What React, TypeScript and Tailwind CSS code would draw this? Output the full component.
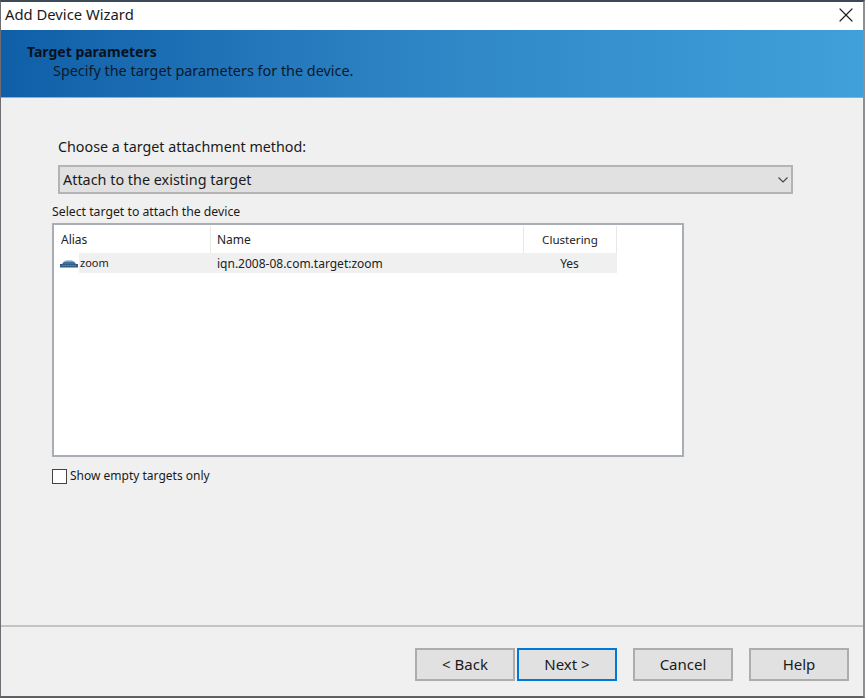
import { X } from 'lucide-react';

const font = { fontFamily: '"Noto Sans", "Open Sans", sans-serif' };

function WizardButton({ label, primary }: { label: string; primary?: boolean }) {
  return (
    <button
      className={`w-[100px] h-[33px] flex items-center justify-center pb-px bg-[#e1e1e1] text-[15px] text-[#1a1a1a] ${
        primary ? 'border-2 border-[#0078d7]' : 'border-2 border-[#adadad]'
      }`}
    >
      {label}
    </button>
  );
}

function TargetIcon() {
  return (
    <svg width="20" height="10" viewBox="0 0 20 10" className="shrink-0">
      <path d="M5 3.5 L15 3.5 L17 6 L3 6 Z" fill="#3f6f9c" />
      <path d="M6.5 2.5 H13.5 V3.5 H6.5 Z" fill="#6f8fae" />
      <path d="M1 6 H19 V9.5 H1 Z" fill="#2f5b85" />
      <path d="M3 7.5 H17" stroke="#8aa5bd" strokeWidth="0.7" strokeDasharray="1 0.6" />
    </svg>
  );
}

export default function App() {
  return (
    <div
      className="w-[865px] h-[698px] flex flex-col bg-[#f0f0f0] border-t-2 border-t-[#3c4a58] border-l border-l-[#6b6f73] border-r-2 border-r-[#8b8f93] border-b-2 border-b-[#5f6265] text-[#1a1a1a] overflow-hidden"
      style={font}
    >
      <div className="h-[28px] shrink-0 bg-white flex items-center justify-between pl-1 pr-[5px]">
        <span className="text-[14.8px] leading-none pb-1">Add Device Wizard</span>
        <X className="w-[24px] h-[24px] text-[#222] mb-[2px]" strokeWidth={1.2} />
      </div>

      <div className="h-[68px] shrink-0 bg-gradient-to-r from-[#0f5fa8] via-[#2f86c6] to-[#40a0d9] border-b border-b-[#a8a8a8] pt-[13px] pl-[26px] text-[#06121f]">
        <div className="text-[14px] leading-[18px] font-bold">Target parameters</div>
        <div className="text-[14.4px] leading-[20px] pl-[26px] text-[#0a1a2c]">
          Specify the target parameters for the device.
        </div>
      </div>

      <div className="flex-1 flex flex-col pl-[50px] pt-[39px]">
        <div className="pl-[7px] text-[14.3px] leading-[20px]">Choose a target attachment method:</div>
        <div className="mt-[8px] ml-[7px] w-[735px] h-[29px] flex items-center justify-between bg-[#e1e1e1] border-2 border-[#b4b4b4] pl-[3px] pr-[3px] text-[14.4px]">
          <span>Attach to the existing target</span>
          <svg width="10" height="6" viewBox="0 0 10 6" className="shrink-0">
            <path d="M0.5 0.5 L5 5 L9.5 0.5" fill="none" stroke="#444" strokeWidth="1.1" />
          </svg>
        </div>
        <div className="mt-[9px] ml-px text-[12.25px] leading-[17px]">Select target to attach the device</div>
        <div className="mt-[3px] ml-px w-[632px] h-[234px] bg-white border-2 border-[#a9aeb5]">
          <div className="flex h-[28px] pt-px text-[12px] text-[#222]">
            <div className="w-[157px] border-r border-r-[#e8e8e8] pl-[7px] flex items-center">Alias</div>
            <div className="w-[313px] border-r border-r-[#e8e8e8] pl-[6px] flex items-center">Name</div>
            <div className="w-[93px] border-r border-r-[#e8e8e8] flex items-center justify-center text-[11.6px]">Clustering</div>
          </div>
          <div className="flex h-[20px] text-[12px] text-[#222]">
            <div className="w-[157px] flex items-center pl-[5px]">
              <TargetIcon />
              <span className="bg-[#f0f0f0] h-full flex-1 flex items-center pl-[1px] pt-px text-[11px]">zoom</span>
            </div>
            <div className="w-[313px] bg-[#f0f0f0] pl-[6px] pt-px flex items-center">iqn.2008-08.com.target:zoom</div>
            <div className="w-[93px] bg-[#f0f0f0] flex items-center justify-center pr-0.5 pt-px">Yes</div>
          </div>
        </div>
        <label className="mt-[11px] ml-px flex items-center gap-[3px] text-[12px] leading-[16px]">
          <span className="w-[15px] h-[15px] bg-white border border-[#444]" />
          Show empty targets only
        </label>
      </div>

      <div className="h-[71px] shrink-0 border-t-2 border-t-[#c4c4c4] pt-[21px] flex pl-[414px]">
        <div className="flex gap-[2px]">
          <WizardButton label="< Back" />
          <WizardButton label="Next >" primary />
        </div>
        <div className="flex gap-[16px] ml-[16px]">
          <WizardButton label="Cancel" />
          <WizardButton label="Help" />
        </div>
      </div>
    </div>
  );
}
